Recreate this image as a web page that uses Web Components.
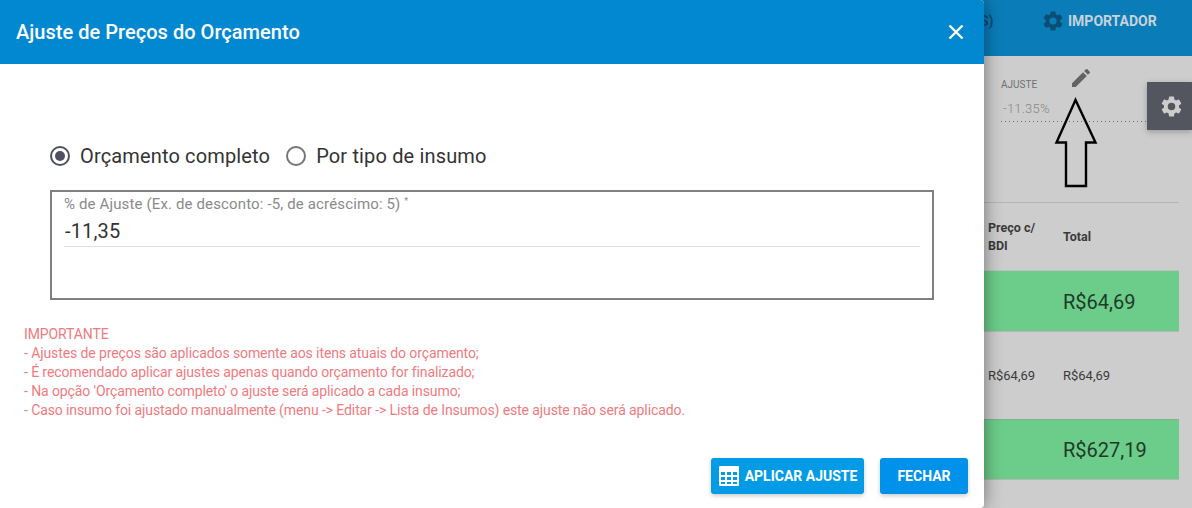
<!DOCTYPE html>
<html lang="pt-BR">
<head>
<meta charset="utf-8">
<title>Ajuste de Preços do Orçamento</title>
<style>
    html, body { margin: 0; height: 100%; }
    body { font-family: Roboto, "Liberation Sans", sans-serif; overflow: hidden; background: #cdcdcd; }
</style>
</head>
<body>
<budget-page>
    <adjust-modal title-text="Ajuste de Preços do Orçamento"></adjust-modal>
</budget-page>

<script>
    const gearPath = 'M19.14 12.94c.04-.3.06-.61.06-.94 0-.32-.02-.64-.07-.94l2.03-1.58a.49.49 0 0 0 .12-.61l-1.92-3.32a.49.49 0 0 0-.59-.22l-2.39.96c-.5-.38-1.03-.7-1.62-.94l-.36-2.54a.48.48 0 0 0-.48-.41h-3.84a.47.47 0 0 0-.47.41l-.36 2.54c-.59.24-1.13.57-1.62.94l-2.39-.96a.48.48 0 0 0-.59.22L2.74 8.87a.47.47 0 0 0 .12.61l2.03 1.58c-.05.3-.09.63-.09.94s.02.64.07.94l-2.03 1.58a.49.49 0 0 0-.12.61l1.92 3.32c.12.22.37.29.59.22l2.39-.96c.5.38 1.03.7 1.62.94l.36 2.54c.05.24.24.41.48.41h3.84c.24 0 .44-.17.47-.41l.36-2.54c.59-.24 1.13-.56 1.62-.94l2.39.96c.22.08.47 0 .59-.22l1.92-3.32a.47.47 0 0 0-.12-.61l-2.01-1.58zM12 15.6A3.6 3.6 0 1 1 12 8.4a3.6 3.6 0 0 1 0 7.2z';

    class BudgetPage extends HTMLElement {
        constructor() {
            super();
            const shadow = this.attachShadow({mode: 'open'});
            shadow.innerHTML = `
                <style>
                    :host { display: block; position: relative; width: 1192px; height: 508px; overflow: hidden; background: #cdcdcd; }
                    .under { display: flex; flex-direction: column; height: 100%; }
                    .topbar { height: 56px; flex: none; background: #0a7db8; display: flex; box-sizing: border-box;
                        padding: 9px 0 0 980px; color: #c9d2d8; font-size: 14px; font-weight: 700; line-height: 24px; }
                    .cut { width: 61px; color: #0b4e75; overflow: hidden; }
                    .imp { display: flex; gap: 3px; }
                    .imp svg { width: 24px; height: 24px; fill: #0b4e75; }
                    .content { flex: 1; padding-left: 984px; padding-right: 13px; }
                    .adjust { height: 147px; border-bottom: 1px solid #b5b5b5; box-sizing: border-box; padding: 12px 5px 0 17px; }
                    .box { height: 54px; box-sizing: border-box;
                        background: repeating-linear-gradient(to right, #6d6d6d 0 1px, transparent 1px 4px) left bottom / 100% 1px no-repeat; }
                    .top { display: flex; height: 30px; }
                    .top small { font-size: 10px; color: #707070; width: 51px; padding-top: 11px; line-height: 12px; }
                    .top svg { width: 24px; height: 24px; fill: #636363; margin-top: -2px; margin-left: 17px; }
                    .val { font-size: 13px; font-weight: 300; color: #868686; padding-left: 2px; line-height: 16px; letter-spacing: .2px; margin-top: 3px; }
                    .head, .row { display: grid; grid-template-columns: 75px 1fr; padding-left: 4px; align-items: center; color: #333; }
                    .head { height: 68px; font-size: 12.5px; font-weight: 700; line-height: 18px; border-bottom: 1px solid #c2c2c2; box-sizing: border-box; color: #3a3a3a; }
                    .row.big { height: 61px; background: #6ccd8a; font-size: 20px; color: #1f3a28; border-bottom: 1px solid #b5b5b5; box-sizing: border-box; padding-top: 1px; }
                    .row.plain { height: 87px; font-size: 13px; color: #3a3a3a; box-sizing: border-box; }
                    .row.big + .row.plain + .row.big { border-top: 1px solid #7fb08f; }
                    .tab { position: absolute; left: 1147px; top: 82px; width: 45px; height: 48px; background: #54565f; box-sizing: border-box; padding-left: 3px;
                        display: flex; align-items: center; justify-content: center; box-shadow: 0 2px 6px rgba(0,0,0,.25); }
                    .tab svg { width: 25px; height: 25px; fill: #cdcdcd; }
                    .arrow { position: absolute; left: 1054px; top: 97px; }
                </style>
                <div class="under">
                    <div class="topbar">
                        <span class="cut">S)</span>
                        <span class="imp"><svg viewBox="0 0 24 24"><path d="${gearPath}"/></svg>IMPORTADOR</span>
                    </div>
                    <div class="content">
                        <div class="adjust">
                            <div class="box">
                                <div class="top">
                                    <small>AJUSTE</small>
                                    <svg viewBox="0 0 24 24"><path d="M3 17.25V21h3.75L17.81 9.94l-3.75-3.75L3 17.25zM20.71 7.04a1 1 0 0 0 0-1.41l-2.34-2.34a1 1 0 0 0-1.41 0l-1.83 1.83 3.75 3.75 1.83-1.83z"/></svg>
                                </div>
                                <div class="val">-11.35%</div>
                            </div>
                        </div>
                        <div class="head"><span>Preço c/<br>BDI</span><span>Total</span></div>
                        <div class="row big"><span></span><span>R$64,69</span></div>
                        <div class="row plain"><span>R$64,69</span><span>R$64,69</span></div>
                        <div class="row big"><span></span><span>R$627,19</span></div>
                    </div>
                </div>
                <div class="tab"><svg viewBox="0 0 24 24"><path d="${gearPath}"/></svg></div>
                <svg class="arrow" width="44" height="92" viewBox="0 0 44 92">
                    <path d="M21.5 3 L2.5 45.5 H12 V89 H32 V45.5 H41.5 Z" fill="none" stroke="#000" stroke-width="2.4"/>
                </svg>
                <slot></slot>`;
        }
    }

    class RadioOption extends HTMLElement {
        constructor() {
            super();
            const shadow = this.attachShadow({mode: 'open'});
            shadow.innerHTML = `
                <style>
                    :host { display: inline-flex; align-items: center; gap: 10px; font-size: 20px; color: #333; letter-spacing: .15px; }
                    .dot { width: 20px; height: 20px; box-sizing: border-box; border: 2px solid #757575; border-radius: 50%; display: flex; align-items: center; justify-content: center; }
                    :host([checked]) .dot { border-color: #4f5160; }
                    :host([checked]) .dot::after { content: ''; width: 10px; height: 10px; border-radius: 50%; background: #4f5160; }
                </style>
                <span class="dot"></span><slot></slot>`;
        }
    }

    class AdjustField extends HTMLElement {
        constructor() {
            super();
            const shadow = this.attachShadow({mode: 'open'});
            shadow.innerHTML = `
                <style>
                    :host { display: block; height: 110px; box-sizing: border-box; border: 2px solid #808080; padding: 4px 12px 0 12px; }
                    label { display: block; font-size: 15px; line-height: 16px; color: #8a8a8a; letter-spacing: .14px; }
                    sup { font-size: 9px; line-height: 0; vertical-align: 5px; }
                    .input { margin-top: 8px; font-size: 20px; line-height: 22px; height: 26px; color: #333; border-bottom: 1px solid #e0e0e0; padding-left: 1px; letter-spacing: .15px; }
                </style>
                <label><slot name="label"></slot> <sup>*</sup></label>
                <div class="input"><slot name="value"></slot></div>`;
        }
    }

    class ActionButton extends HTMLElement {
        constructor() {
            super();
            const shadow = this.attachShadow({mode: 'open'});
            shadow.innerHTML = `
                <style>
                    :host { display: inline-flex; align-items: center; justify-content: center; gap: 5px; height: 36px; box-sizing: border-box;
                        border-radius: 3px; background: #0091ea; color: #fff; font-size: 14px; font-weight: 700;
                        box-shadow: 0 2px 4px rgba(0,0,0,.2); }
                    ::slotted(svg) { width: 22px; height: 22px; fill: #fff; }
                </style>
                <slot></slot>`;
        }
    }

    class AdjustModal extends HTMLElement {
        constructor() {
            super();
            const shadow = this.attachShadow({mode: 'open'});
            shadow.innerHTML = `
                <style>
                    :host { position: absolute; left: 0; top: 0; width: 984px; height: 508px; display: flex; flex-direction: column;
                        background: #fff; border-radius: 0 4px 4px 0; box-shadow: 0 0 18px rgba(0,0,0,.45); font-family: Roboto, "Liberation Sans", sans-serif; }
                    header { height: 64px; flex: none; background: #0288d1; color: #fff; display: flex; align-items: center; justify-content: space-between;
                        padding: 0 16px; font-size: 20px; font-weight: 500; letter-spacing: .03px; border-radius: 0 4px 0 0; }
                    header svg { width: 24px; height: 24px; fill: none; stroke: #fff; stroke-width: 2.4; }
                    .radios { display: flex; gap: 16px; padding: 81px 50px 0; height: 22px; align-items: center; }
                    .field { margin: 23px 50px 0; }
                    .notes { margin: 25px 24px 0; font-size: 14px; line-height: 19px; color: #ee7b80; letter-spacing: -.1px; }
                    footer { margin-top: auto; display: flex; justify-content: flex-end; gap: 16px; padding: 0 16px 14px 0; }
                    .apply { width: 153px; background: #039be5; }
                    .close { width: 88px; }
                </style>
                <header>
                    <span id="title"></span>
                    <svg viewBox="0 0 24 24"><path d="M5.5 5.5 18.5 18.5M18.5 5.5 5.5 18.5"/></svg>
                </header>
                <div class="radios">
                    <radio-option checked>Orçamento completo</radio-option>
                    <radio-option>Por tipo de insumo</radio-option>
                </div>
                <adjust-field class="field">
                    <span slot="label">% de Ajuste (Ex. de desconto: -5, de acréscimo: 5)</span>
                    <span slot="value">-11,35</span>
                </adjust-field>
                <div class="notes">
                    IMPORTANTE<br>
                    - Ajustes de preços são aplicados somente aos itens atuais do orçamento;<br>
                    - É recomendado aplicar ajustes apenas quando orçamento for finalizado;<br>
                    - Na opção 'Orçamento completo' o ajuste será aplicado a cada insumo;<br>
                    - Caso insumo foi ajustado manualmente (menu -&gt; Editar -&gt; Lista de Insumos) este ajuste não será aplicado.
                </div>
                <footer>
                    <action-button class="apply">
                        <svg viewBox="0 0 22 22"><path fill-rule="evenodd" d="M2 1h18a1 1 0 0 1 1 1v18a1 1 0 0 1-1 1H2a1 1 0 0 1-1-1V2a1 1 0 0 1 1-1zm1 6v3h4V7H3zm6 0v3h4V7H9zm6 0v3h4V7h-4zM3 12v3h4v-3H3zm6 0v3h4v-3H9zm6 0v3h4v-3h-4zM3 17v2h4v-2H3zm6 0v2h4v-2H9zm6 0v2h4v-2h-4z"/></svg>
                        APLICAR AJUSTE
                    </action-button>
                    <action-button class="close">FECHAR</action-button>
                </footer>`;
            shadow.querySelector('#title').textContent = this.getAttribute('title-text');
        }
    }

    customElements.define('budget-page', BudgetPage);
    customElements.define('radio-option', RadioOption);
    customElements.define('adjust-field', AdjustField);
    customElements.define('action-button', ActionButton);
    customElements.define('adjust-modal', AdjustModal);
</script>
</body>
</html>
